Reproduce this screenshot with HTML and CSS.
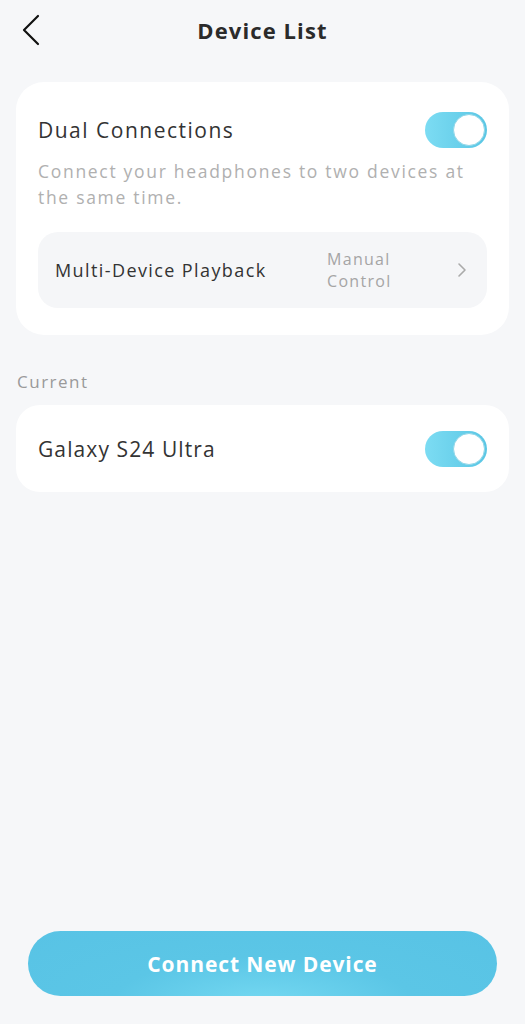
FILE: index.html
```html
<!DOCTYPE html>
<html lang="en">
<head>
    <meta charset="UTF-8">
    <meta name="viewport" content="width=device-width, initial-scale=1.0">
    <title>Device List</title>
    <link rel="stylesheet" href="styles.css">
</head>
<body>
    <div class="screen">
        <header class="topbar">
            <button class="back" aria-label="Back">
                <svg width="20" height="32" viewBox="0 0 20 32">
                    <path d="M17 2 L3 16 L17 30" fill="none" stroke="#111" stroke-width="2.2" stroke-linecap="round" stroke-linejoin="round"/>
                </svg>
            </button>
            <h1 class="title">Device List</h1>
        </header>

        <section class="card dual">
            <div class="row-head">
                <span class="label">Dual Connections</span>
                <span class="toggle on"><span class="knob"></span></span>
            </div>
            <p class="desc">Connect your headphones to two devices at the same time.</p>
            <div class="sub-row">
                <span class="sub-label">Multi-Device Playback</span>
                <span class="sub-value">Manual<br>Control</span>
                <svg class="chev" width="10" height="16" viewBox="0 0 10 16">
                    <path d="M2 2 L8 8 L2 14" fill="none" stroke="#aaa" stroke-width="1.6" stroke-linecap="round" stroke-linejoin="round"/>
                </svg>
            </div>
        </section>

        <div class="section-title">Current</div>

        <section class="card device">
            <span class="label">Galaxy S24 Ultra</span>
            <span class="toggle on"><span class="knob"></span></span>
        </section>

        <div class="spacer"></div>

        <button class="connect">Connect New Device</button>
    </div>
</body>
</html>
```

FILE: styles.css
```css
* {
    box-sizing: border-box;
}
body {
    margin: 0;
    background-color: #f6f7f9;
    font-family: "Open Sans", sans-serif;
    color: #333;
    letter-spacing: 1.3px;
}
.screen {
    height: 1024px;
    display: flex;
    flex-direction: column;
    padding: 0 16px;
}
.topbar {
    height: 60px;
    display: flex;
    align-items: center;
    justify-content: center;
    position: relative;
}
.back {
    position: absolute;
    left: 5px;
    top: 14px;
    border: none;
    background: none;
    padding: 0;
}
.title {
    margin: 0;
    font-size: 22px;
    font-weight: 700;
    letter-spacing: 1.1px;
    color: #2b2b2b;
}
.card {
    background-color: white;
    border-radius: 28px;
    padding: 0 22px;
}
.dual {
    margin-top: 22px;
    padding-top: 30px;
    padding-bottom: 27px;
}
.row-head {
    display: flex;
    align-items: center;
    justify-content: space-between;
}
.label {
    font-size: 21px;
    color: #333;
}
.dual .label {
    letter-spacing: 1.5px;
}
.device .label {
    letter-spacing: 1.1px;
}
.toggle {
    width: 62px;
    height: 36px;
    border-radius: 18px;
    background: linear-gradient(90deg, #7cdcf3, #5ac6e4);
    display: flex;
    align-items: center;
    justify-content: flex-end;
    padding: 2px;
}
.knob {
    width: 32px;
    height: 32px;
    border-radius: 50%;
    background-color: white;
    border: 1px solid #8fd6e8;
}
.desc {
    margin: 10px 0 22px;
    font-size: 17.5px;
    line-height: 26px;
    letter-spacing: 1.7px;
    color: #b0b0b0;
}
.sub-row {
    display: flex;
    align-items: center;
    background-color: #f5f6f8;
    border-radius: 20px;
    height: 76px;
    padding: 0 20px 0 17px;
}
.sub-label {
    flex: 1;
    font-size: 18px;
    letter-spacing: 1.4px;
}
.sub-value {
    font-size: 16px;
    line-height: 22px;
    color: #a5a5a5;
    margin-right: 38px;
    width: 92px;
}
.section-title {
    margin: 35px 1px 12px;
    font-size: 17px;
    letter-spacing: 1.5px;
    color: #9a9a9a;
}
.device {
    height: 87px;
    border-radius: 24px;
    display: flex;
    align-items: center;
    justify-content: space-between;
}
.spacer {
    flex: 1;
}
.connect {
    margin: 0 12px 28px;
    height: 65px;
    border: none;
    border-radius: 33px;
    background: radial-gradient(ellipse at 50% 110%, #74d8f1 0%, #5bc6e6 45%, #58c3e5 100%);
    color: white;
    font-family: "Open Sans", sans-serif;
    font-size: 21px;
    font-weight: 700;
    letter-spacing: 0.9px;
}
```
